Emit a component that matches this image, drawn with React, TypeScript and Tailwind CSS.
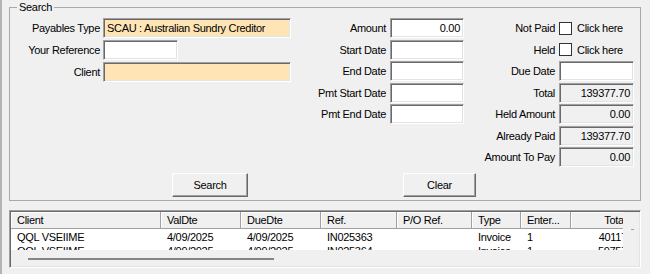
import React from "react";

const sunken =
  "border border-t-[#a0a0a0] border-l-[#a0a0a0] border-b-white border-r-white shadow-[inset_1px_1px_0_#696969,inset_-1px_-1px_0_#e3e3e3]";

function Label({ children }: { children: React.ReactNode }) {
  return <div className="flex items-center justify-end whitespace-nowrap">{children}</div>;
}

function Box({
  value = "",
  className = "",
  right = false,
}: {
  value?: string;
  className?: string;
  right?: boolean;
}) {
  return (
    <div
      className={`${sunken} h-[20px] flex items-center px-[3px] whitespace-nowrap overflow-hidden ${
        right ? "justify-end" : ""
      } ${className}`}
    >
      {value}
    </div>
  );
}

function Check() {
  return (
    <div className="flex items-center gap-[5px]">
      <div className="w-[13px] h-[13px] bg-white border border-[#333333]" />
      <span>Click here</span>
    </div>
  );
}

function Button({ children, className = "" }: { children: React.ReactNode; className?: string }) {
  return (
    <div
      className={`h-[24px] flex items-center justify-center bg-[#f0f0f0] border border-t-white border-l-white border-b-[#696969] border-r-[#696969] shadow-[inset_-1px_-1px_0_#a0a0a0] ${className}`}
    >
      {children}
    </div>
  );
}

const cols = [
  { name: "Client", w: 150, right: false },
  { name: "ValDte", w: 80, right: false },
  { name: "DueDte", w: 80, right: false },
  { name: "Ref.", w: 76, right: false },
  { name: "P/O Ref.", w: 75, right: false },
  { name: "Type", w: 49, right: false },
  { name: "Enter...", w: 50, right: false },
  { name: "Total", w: 60, right: true },
];

const rows = [
  ["QQL VSEIIME", "4/09/2025", "4/09/2025", "IN025363", "", "Invoice", "1", "40117"],
  ["QQL VSEIIME", "4/09/2025", "4/09/2025", "IN025364", "", "Invoice", "1", "59757"],
];

export default function App() {
  return (
    <div className="w-[650px] h-[274px] overflow-hidden bg-[#f0f0f0] border-l-2 border-[#b4b4b4] pl-[7px] pt-[7px] font-['Liberation_Sans',Arial,sans-serif] text-[11px] tracking-[-0.3px] text-black leading-[14px]">
      {/* Group box */}
      <div className="relative w-[632px] h-[194px] border border-[#a9a9a9]">
        <span className="absolute -top-[8px] left-[7px] px-[2px] bg-[#f0f0f0] leading-[14px]">
          Search
        </span>
        <div className="pt-[10px] flex flex-col">
          <div className="flex items-start">
            {/* Column 1 */}
            <div className="grid grid-cols-[90px_188px] auto-rows-[20px] gap-x-[3px] gap-y-[2px]">
              <Label>Payables Type</Label>
              <Box value="SCAU : Australian Sundry Creditor" className="bg-[#ffe4b5]" />
              <Label>Your Reference</Label>
              <Box className="bg-white w-[75px]" />
              <Label>Client</Label>
              <Box className="bg-[#ffe4b5]" />
            </div>
            {/* Column 2 */}
            <div className="ml-[5px] grid grid-cols-[90px_74px] auto-rows-[20px] gap-x-[4px] gap-y-[1.5px]">
              <Label>Amount</Label>
              <Box value="0.00" right className="bg-white" />
              <Label>Start Date</Label>
              <Box className="bg-white" />
              <Label>End Date</Label>
              <Box className="bg-white" />
              <Label>Pmt Start Date</Label>
              <Box className="bg-white" />
              <Label>Pmt End Date</Label>
              <Box className="bg-white" />
            </div>
            {/* Column 3 */}
            <div className="ml-[1px] grid grid-cols-[90px_75px] auto-rows-[20px] gap-x-[4px] gap-y-[1.5px]">
              <Label>Not Paid</Label>
              <Check />
              <Label>Held</Label>
              <Check />
              <Label>Due Date</Label>
              <Box className="bg-white" />
              <Label>Total</Label>
              <Box value="139377.70" right className="bg-[#f0f0f0]" />
              <Label>Held Amount</Label>
              <Box value="0.00" right className="bg-[#f0f0f0]" />
              <Label>Already Paid</Label>
              <Box value="139377.70" right className="bg-[#f0f0f0]" />
              <Label>Amount To Pay</Label>
              <Box value="0.00" right className="bg-[#f0f0f0]" />
            </div>
          </div>
          <div className="flex mt-[6px]">
            <Button className="ml-[162px] w-[76px]">Search</Button>
            <Button className="ml-[155px] w-[73px]">Clear</Button>
          </div>
        </div>
      </div>

      {/* List view */}
      <div className={`mt-[9px] w-[632px] h-[58px] ${sunken} p-[1px] flex flex-col`}>
        <div className="flex h-[38px]">
          <div className="w-[612px] h-[38px] overflow-hidden flex flex-col">
            <div className="flex h-[17px] shrink-0">
              {cols.map((c) => (
                <div
                  key={c.name}
                  style={{ width: c.w }}
                  className={`shrink-0 h-[17px] flex items-center whitespace-nowrap overflow-hidden border-r border-b border-r-[#a0a0a0] border-b-[#a0a0a0] shadow-[inset_1px_1px_0_#ffffff] ${
                    c.right ? "justify-end pr-[4px]" : "pl-[6px]"
                  }`}
                >
                  {c.name}
                </div>
              ))}
            </div>
            <div className="bg-white flex-1 flex flex-col pt-[1px]">
              {rows.map((r, i) => (
                <div key={i} className="flex h-[14px] shrink-0">
                  {r.map((v, j) => (
                    <div
                      key={j}
                      style={{ width: cols[j].w }}
                      className={`shrink-0 whitespace-nowrap overflow-hidden ${
                        cols[j].right ? "text-right pr-[4px]" : "pl-[6px]"
                      }`}
                    >
                      {v}
                    </div>
                  ))}
                </div>
              ))}
            </div>
          </div>
          <div className="flex-1 flex justify-center pt-[17px]">
            <div className="w-[3px] h-[1px] bg-[#a0a0a0] ml-[3px]" />
          </div>
        </div>
        <div className="flex-1 pt-[8px] pl-[17px]">
          <div className="w-[246px] h-[2px] bg-[#858585]" />
        </div>
      </div>
    </div>
  );
}
